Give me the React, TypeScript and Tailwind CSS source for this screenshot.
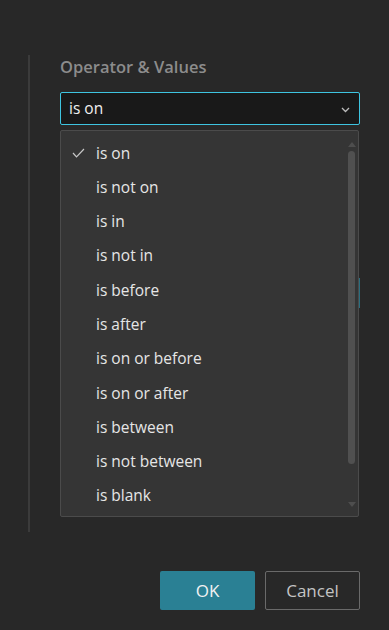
const operators = [
  'is on',
  'is not on',
  'is in',
  'is not in',
  'is before',
  'is after',
  'is on or before',
  'is on or after',
  'is between',
  'is not between',
  'is blank',
]

export default function App() {
  const selected = 'is on'
  return (
    <div
      className="relative w-[389px] h-[630px] bg-[#282828] overflow-hidden"
      style={{ fontFamily: '"Open Sans", "Noto Sans", sans-serif' }}
    >
      <div className="pt-[55px] pl-[28px]">
        <div className="h-[477px] border-l-2 border-[#3b3b3b] pl-[30px] pr-[29px]">
          <div className="text-[16.5px] leading-[24px] font-semibold text-[#8c8c8c]">
            Operator &amp; Values
          </div>
          <div className="mt-[13px] h-[33px] flex items-center justify-between border border-[#3ec4e0] bg-[#191919] rounded-[2px] pl-[8px] pr-[9px]">
            <span className="text-[15.5px] text-[#f0f0f0]">is on</span>
            <svg width="9" height="6" viewBox="0 0 9 6" className="mt-[2px]">
              <path d="M1 1l3.5 3.5L8 1" fill="none" stroke="#bdbdbd" strokeWidth="1.3" />
            </svg>
          </div>
          <div className="relative mt-[5px] h-[387px] w-[299px] border border-[#4b4b4b] bg-[#353535] rounded-[2px] pt-[5px]">
            {operators.map((op) => (
              <div key={op} className="relative h-[34.3px] flex items-center pl-[35px]">
                {op === selected && (
                  <svg width="13" height="10" viewBox="0 0 13 10" className="absolute left-[11px] top-[12px]">
                    <path d="M1 5l3.5 3.8L12 1" fill="none" stroke="#c8c8c8" strokeWidth="1.2" />
                  </svg>
                )}
                <span className="text-[15.5px] text-[#e6e6e6]">{op}</span>
              </div>
            ))}
            <svg width="8" height="6" viewBox="0 0 8 6" className="absolute left-[287px] top-[10px]">
              <path d="M0 6L4 1L8 6Z" fill="#4e4e4e" />
            </svg>
            <div className="absolute left-[287px] top-[20px] w-[7px] h-[313px] rounded-full bg-[#505050]" />
            <svg width="8" height="6" viewBox="0 0 8 6" className="absolute left-[287px] top-[371px]">
              <path d="M0 0L8 0L4 5Z" fill="#4e4e4e" />
            </svg>
          </div>
        </div>
      </div>
      <div className="absolute left-[359px] top-[278px] w-px h-[30px] bg-[#2a6f80]" />
      <div className="mt-[39px] flex justify-end gap-[10px] pr-[29px]">
        <button className="w-[95px] h-[39px] rounded-[2px] bg-[#2a8094] text-[17px] text-[#f2f2f2]">
          OK
        </button>
        <button className="w-[95px] h-[39px] rounded-[2px] border border-[#6a6a6a] text-[17px] text-[#c4c4c4]">
          Cancel
        </button>
      </div>
    </div>
  )
}
